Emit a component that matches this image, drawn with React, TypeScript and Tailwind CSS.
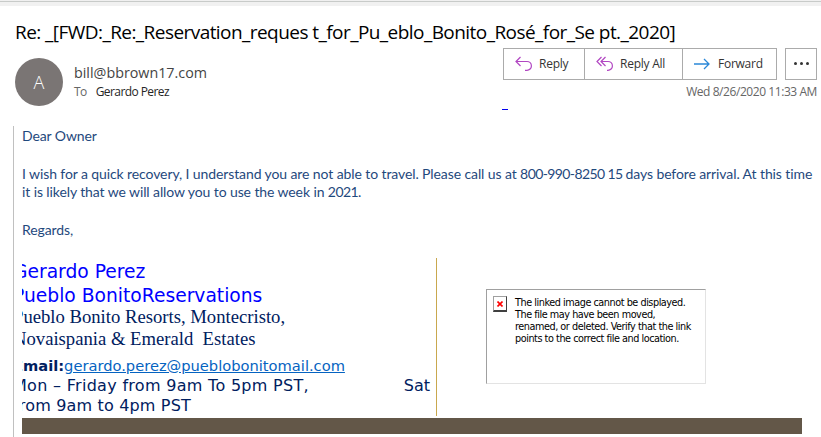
import type { ReactNode } from "react";

function ReplyIcon() {
  return (
    <svg width="17" height="16" viewBox="0 0 17 16" fill="none" stroke="#b146c2" strokeWidth="1.2">
      <path d="M5.5 1 L1 5.5 L5.5 10 M1 5.5 H12 A4.4 4.4 0 0 1 12 14.3 H10" />
    </svg>
  );
}

function ReplyAllIcon() {
  return (
    <svg width="17" height="16" viewBox="0 0 17 16" fill="none" stroke="#b146c2" strokeWidth="1.2">
      <path d="M5.5 1 L1 5.5 L5.5 10 M9.5 1 L5 5.5 L9.5 10 M5 5.5 H12 A4.4 4.4 0 0 1 12 14.3 H11" />
    </svg>
  );
}

function ForwardIcon() {
  return (
    <svg width="16" height="12" viewBox="0 0 16 12" fill="none" stroke="#2b88d8" strokeWidth="1.3">
      <path d="M0 6 H15 M10 1 L15 6 L10 11" />
    </svg>
  );
}

function ActionButton({ className, children }: { className: string; children: ReactNode }) {
  return (
    <button
      className={`flex h-8 shrink-0 items-center whitespace-nowrap border border-[#ababab] text-[12px] tracking-[-0.25px] text-[#333] ${className}`}
    >
      {children}
    </button>
  );
}

function MessageHeader() {
  return (
    <header className="h-[126px] font-['Open_Sans',sans-serif]">
      <div className="h-[6px] border-t border-[#f0f0f0] bg-[#f1f1f1]">
        <div className="h-px bg-[#c8cbc9]" />
      </div>
      <h1 className="mt-[12px] ml-[15px] h-[28px] whitespace-nowrap text-[19px] leading-[28px] tracking-[-0.56px] text-black">
        Re: _[FWD:_Re:_Reservation_reques t_for_Pu_eblo_Bonito_Rosé_for_Se pt._2020]
      </h1>
      <div className="mt-[2px] flex">
        <div className="mt-[10px] ml-[15px] flex size-12 items-center justify-center rounded-full bg-[#7a7574] text-[18px] text-white">
          <span className="mt-px font-light">A</span>
        </div>
        <div className="mt-[14px] ml-[11px] whitespace-nowrap">
          <div className="text-[14.3px] leading-[22px] text-[#444]">bill@bbrown17.com</div>
          <div className="flex gap-[9px] text-[12px] leading-[16px] tracking-[-0.58px]">
            <span className="text-[#666]">To</span>
            <span className="text-[#262626]">Gerardo Perez</span>
          </div>
        </div>
        <div className="mr-[4px] ml-auto">
          <div className="flex">
            <ActionButton className="w-[82px] gap-[7px] pl-[11px]">
              <ReplyIcon />
              Reply
            </ActionButton>
            <ActionButton className="-ml-px w-[99px] gap-[7px] pl-[11px]">
              <ReplyAllIcon />
              Reply All
            </ActionButton>
            <ActionButton className="-ml-px w-[95px] gap-[8px] pl-[11px]">
              <ForwardIcon />
              Forward
            </ActionButton>
            <ActionButton className="ml-[8px] w-8 justify-center gap-[3px] pb-px">
              <span className="size-[3px] rounded-full bg-[#333]" />
              <span className="size-[3px] rounded-full bg-[#333]" />
              <span className="size-[3px] rounded-full bg-[#333]" />
            </ActionButton>
          </div>
          <div className="mt-[4px] text-right text-[12px] leading-[16px] tracking-[-0.43px] text-[#666]">
            Wed 8/26/2020 11:33 AM
          </div>
          <div className="mt-[9px] ml-[-1px] h-px w-[6px] bg-[#0000ee]" />
        </div>
      </div>
    </header>
  );
}

function Signature() {
  return (
    <div className="h-[158px] w-[415px] overflow-hidden border-r border-[#c9a84e] text-[#002060]">
      <div className="-ml-[9px] whitespace-pre pt-[2px] font-['DejaVu_Sans',sans-serif]">
        <div className="h-[24px] text-[18.7px] leading-[24px] text-[#0000ff]">Gerardo Perez</div>
        <div className="h-[22px] text-[18.7px] leading-[24px] text-[#0000ff]">
          Pueblo BonitoReservations
        </div>
        <div className="h-[22px] font-['Liberation_Serif',serif] text-[18.67px] leading-[22px]">
          Pueblo Bonito Resorts, Montecristo,
        </div>
        <div className="h-[22px] font-['Liberation_Serif',serif] text-[18.67px] leading-[22px]">
          {"Novaispania & Emerald  Estates"}
        </div>
        <div className="mt-[6px] h-[19px] text-[14.67px] leading-[19px]">
          <b>Email:</b>
          <span className="text-[#0563c1] underline">gerardo.perez@pueblobonitomail.com</span>
        </div>
        <div className="flex h-[20px] justify-between pr-[6px] text-[16px] leading-[21px]">
          <span className="tracking-[0.3px]">Mon – Friday from 9am To 5pm PST,</span>
          <span>Sat</span>
        </div>
        <div className="h-[21px] text-[16px] leading-[22px] tracking-[0.17px]">from 9am to 4pm PST</div>
      </div>
    </div>
  );
}

function MissingImage() {
  return (
    <div className="mt-[31px] ml-[49px] flex h-[95px] w-[220px] border border-t-[#a0a0a0] border-r-[#e3e3e3] border-b-[#e3e3e3] border-l-[#a0a0a0]">
      <div className="mt-[6px] ml-[6px] flex h-[16px] w-[14px] items-center justify-center border border-t-[#a0a0a0] border-r-[#404040] border-b-2 border-b-[#404040] border-l-[#a0a0a0]">
        <svg width="6" height="6" viewBox="0 0 6 6" stroke="#ff0000" strokeWidth="1.6">
          <path d="M0.5 0.5 L5.5 5.5 M5.5 0.5 L0.5 5.5" />
        </svg>
      </div>
      <div className="mt-[7px] ml-[8px] whitespace-nowrap font-['DejaVu_Sans',sans-serif] text-[9.7px] leading-[12px] tracking-[-0.46px] text-black">
        <div>The linked image cannot be displayed.</div>
        <div>The file may have been moved,</div>
        <div>renamed, or deleted. Verify that the link</div>
        <div>points to the correct file and location.</div>
      </div>
    </div>
  );
}

export default function App() {
  return (
    <div className="h-[437px] w-[821px] overflow-hidden bg-white">
      <MessageHeader />
      <main className="ml-[13px] h-[311px] border-l border-[#c0c0c0] pl-[8px]">
        <div className="whitespace-nowrap font-['Lato',sans-serif] text-[14px] leading-[19px] tracking-[-0.1px] text-[#1f497d]">
          <p className="mb-[19px]">Dear Owner</p>
          <p className="h-[18px]">
            I wish for a quick recovery, I understand you are not able to travel. Please call us at{" "}
            <span className="tracking-[-0.6px]">800-990-8250 15 </span>
            days before arrival. At this time
          </p>
          <p className="mb-[19px]">
            it is likely that we will allow you to use the week in{" "}
            <span className="tracking-[-0.6px]">2021.</span>
          </p>
          <p>Regards,</p>
        </div>
        <div className="mt-[19px] flex">
          <Signature />
          <MissingImage />
        </div>
        <div className="mt-[2px] h-4 w-[780px] bg-[#635748]" />
      </main>
    </div>
  );
}
